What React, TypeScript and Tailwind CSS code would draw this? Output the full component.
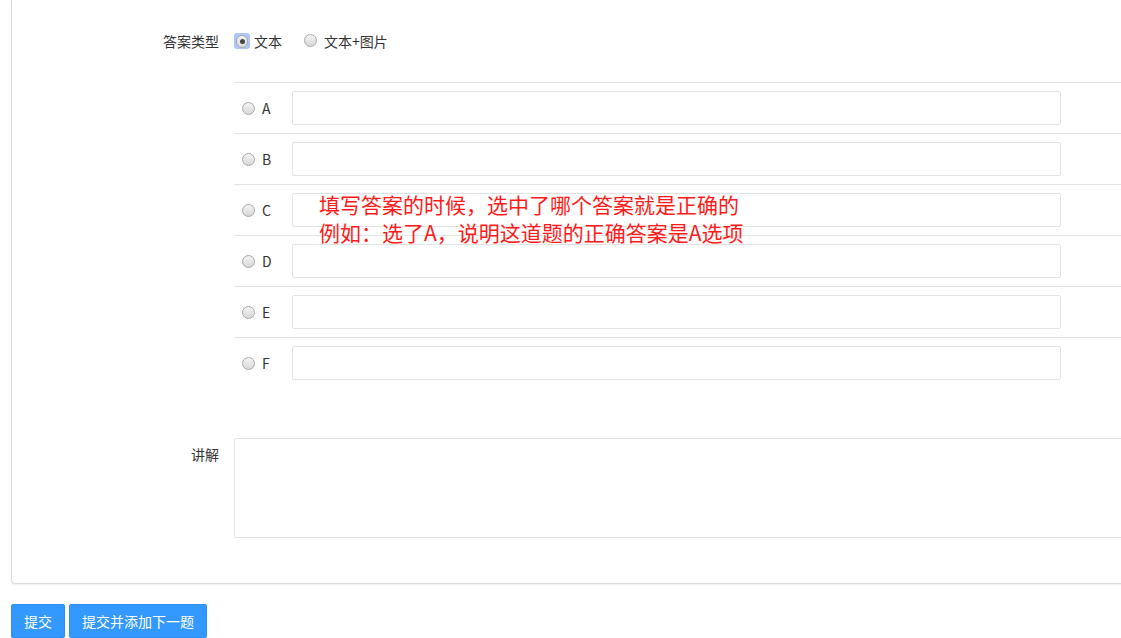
import React from "react";

const font = { fontFamily: '"Microsoft YaHei", "Noto Sans CJK SC", "Liberation Sans", sans-serif' };

const options = ["A", "B", "C", "D", "E", "F"];

// plain gray radio circle, optionally checked / focused
const Radio = ({ checked = false, focused = false }: { checked?: boolean; focused?: boolean }) => (
  <span
    className={`inline-flex items-center justify-center rounded-[3px] ${
      focused ? "w-[16px] h-[16px] bg-[#a9c8f5] p-[2px]" : "w-[13px] h-[13px]"
    }`}
  >
    <span className="flex items-center justify-center w-[13px] h-[13px] rounded-full border border-[#a8a8a8] bg-gradient-to-b from-[#f4f4f4] to-[#d8d8d8]">
      {checked && <span className="w-[5px] h-[5px] rounded-full bg-[#444]" />}
    </span>
  </span>
);

export default function App() {
  return (
    <div className="w-[1121px] h-[638px] overflow-hidden bg-white text-[#333] text-[14px]" style={font}>
      <div className="pl-[11px]">
        <div className="relative w-[1140px] border border-t-0 border-[#dcdcdc] rounded-b-[4px] shadow-[0_1px_2px_rgba(0,0,0,0.08)] pt-[31px] pb-[45px]">
          {/* answer type */}
          <div className="flex items-center h-[20px]">
            <div className="w-[207px] text-right">答案类型</div>
            <div className="ml-[15px] flex items-center">
              <Radio checked focused />
              <span className="ml-[4px]">文本</span>
              <span className="ml-[22px]">
                <Radio />
              </span>
              <span className="ml-[7px]">文本+图片</span>
            </div>
          </div>

          {/* options */}
          <div className="ml-[222px] mt-[31px]">
            {options.map((o) => (
              <div key={o} className="flex items-center h-[51px] border-t border-[#e3e3e3]">
                <span className="ml-[8px] flex">
                  <Radio />
                </span>
                <span className="ml-[7px] w-[30px]">{o}</span>
                <div className="w-[769px] h-[34px] border border-[#e3e3e3] rounded-[2px]" />
              </div>
            ))}
          </div>

          {/* explanation */}
          <div className="flex mt-[50px]">
            <div className="w-[207px] text-right pt-[6px]">讲解</div>
            <div className="ml-[15px] flex-1 h-[100px] border border-[#e3e3e3] rounded-[2px]" />
          </div>

          <div className="absolute left-[307px] top-[190px] text-[21px] leading-[28px] text-[#ff1a1a]">
            <div>填写答案的时候，选中了哪个答案就是正确的</div>
            <div>例如：选了A，说明这道题的正确答案是A选项</div>
          </div>
        </div>

        <div className="flex gap-[4px] mt-[20px]">
          <button className="w-[54px] h-[34px] bg-[#3399ff] text-white rounded-[2px] border border-[#2f8ff0]">提交</button>
          <button className="w-[138px] h-[34px] bg-[#3399ff] text-white rounded-[2px] border border-[#2f8ff0]">提交并添加下一题</button>
        </div>
      </div>
    </div>
  );
}
